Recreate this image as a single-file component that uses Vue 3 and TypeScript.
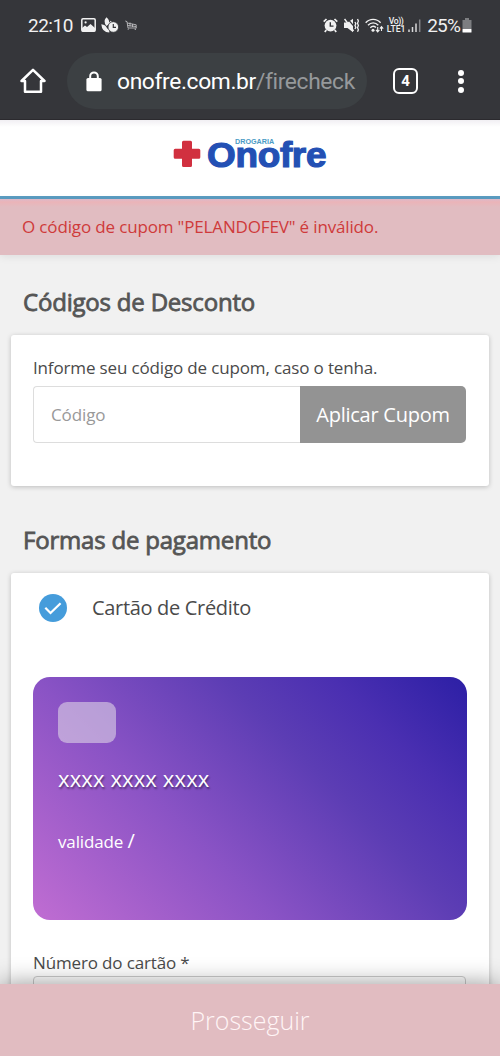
<script setup lang="ts">
import { ref } from 'vue'

const coupon = ref<string>('')
const tabCount = 4
</script>

<template>
  <div class="screen">
    <div class="browser">
      <div class="status">
        <span class="clock">22:10</span>
        <svg class="i-photo" width="15" height="14" viewBox="0 0 15 14">
          <rect x="0.8" y="0.8" width="13.4" height="12.4" rx="1.2" fill="none" stroke="#f1f1f1" stroke-width="1.5" />
          <circle cx="4.6" cy="4.4" r="1.1" fill="#f1f1f1" />
          <path d="M1 10l3-2.6 2 1.5L9.5 6 14 10v3.5H1z" fill="#f1f1f1" />
        </svg>
        <svg class="i-plant" width="18" height="16" viewBox="0 0 18 16">
          <path d="M5.5.3Q9.500 3.500 7.500 7.500L5.500 9Q1.500 4 5.500.3z" fill="#f1f1f1" />
          <path d="M.3 7.200Q5 7.500 6.300 12l2-2.500v6Q1 15.500.3 7.200z" fill="#f1f1f1" />
          <path d="M8 7.500l2.500-3" stroke="#f1f1f1" stroke-width="2" />
          <circle cx="12.300" cy="10" r="5.300" fill="#f1f1f1" stroke="#35363a" stroke-width=".8" />
          <path d="M12.300 7v3.300h2.700" fill="none" stroke="#35363a" stroke-width="1.200" />
        </svg>
        <svg class="i-cart" width="12" height="10" viewBox="0 0 12 10">
          <path d="M.3 1l1.700.6L3 8h8.500M2.200 3l9 1.800V8M2.500 5.500l8.500 1M5 2.500v4M7.500 4v3" fill="none" stroke="#bdbdc0" stroke-width=".9" />
          <circle cx="3.200" cy="9.100" r=".7" fill="#bdbdc0" />
          <circle cx="10.300" cy="9.200" r=".7" fill="#bdbdc0" />
        </svg>
        <span class="spacer"></span>
        <svg class="i-alarm" width="15" height="15" viewBox="0 0 15 15">
          <circle cx="7.500" cy="7.600" r="5.900" fill="#f1f1f1" />
          <path d="M.7 3.600L3.500 1M14.300 3.600L11.500 1M3.300 12l-1.500 2M11.700 12l1.500 2" stroke="#f1f1f1" stroke-width="1.700" />
          <path d="M7.300 4.200v3.900h3.200" fill="none" stroke="#35363a" stroke-width="1.400" />
        </svg>
        <svg class="i-mute" width="15" height="15" viewBox="0 0 15 15">
          <path d="M0 4.500h3.500L9 .8v13.400L3.500 10H0z" fill="#f1f1f1" />
          <path d="M4.800 2.200l5 6" stroke="#35363a" stroke-width="1.300" />
          <path d="M.5 1l9 12" stroke="#f1f1f1" stroke-width="1.500" />
          <path d="M11 4l.8 1.700-.8 1.800.8 1.800L11 11M13.500 1l.9 2-.9 2.200.9 2.300-.9 2.300.9 2-.9 2" fill="none" stroke="#f1f1f1" stroke-width="1.300" />
        </svg>
        <svg class="i-wifi" width="19" height="15" viewBox="0 0 19 15">
          <path d="M.7 4.800C4.800.2 11.500.2 15.600 4.800M3 7.300c3-3.200 7.300-3.200 10.300 0M5.300 9.800c1.600-1.700 4-1.700 5.600-.3" fill="none" stroke="#f1f1f1" stroke-width="1.400" />
          <circle cx="8" cy="12.200" r="1.500" fill="#f1f1f1" />
          <path d="M12.700 9v4.300M11 11.800l1.700 2 1.700-2M16.500 13V9M14.900 10.700l1.600-2 1.700 2" fill="none" stroke="#f1f1f1" stroke-width="1.100" />
        </svg>
        <span class="lte"><span class="vo">Vo))</span><span>LTE1</span></span>
        <svg class="i-signal" width="13" height="13" viewBox="0 0 13 13">
          <path d="M1 10.500V13M4.500 8v5M8 4.500V13" stroke="#d8d8d9" stroke-width="1.500" />
          <path d="M11.700.5V13" stroke="#85868a" stroke-width="1.500" />
        </svg>
        <span class="percent">25%</span>
        <svg class="i-battery" width="10" height="15" viewBox="0 0 10 15">
          <path d="M3 0h4v2h2.500v9H.5V2H3z" fill="#7d7e81" />
          <rect x=".5" y="11" width="9" height="3.500" rx=".5" fill="#fff" />
        </svg>
      </div>
      <div class="toolbar">
        <svg class="home" width="26" height="26" viewBox="0 0 26 26">
          <path d="M1.500 13L13 1.800 24.500 13H21v10.700H5V13z" fill="none" stroke="#fff" stroke-width="2.500" stroke-linejoin="round" />
        </svg>
        <div class="url">
          <svg width="16" height="21" viewBox="0 0 16 21">
            <path d="M4.200 8V5.200a3.800 3.800 0 0 1 7.600 0V8" fill="none" stroke="#fff" stroke-width="2" />
            <rect x=".4" y="7" width="15.200" height="13.300" rx="1.600" fill="#fff" />
          </svg>
          <span class="address">onofre.com.br<span class="path">/firecheck</span></span>
        </div>
        <div class="tabs">{{ tabCount }}</div>
        <div class="menu"><i></i><i></i><i></i></div>
      </div>
    </div>

    <header class="brand">
      <svg class="cross" width="28" height="28" viewBox="0 0 28 28">
        <path d="M10.500.7h7q1.500 0 1.500 1.500v6.600h6.800q1.500 0 1.500 1.500v7q0 1.500-1.500 1.500H19v6.700q0 1.500-1.500 1.500h-7Q9 27 9 25.500v-6.700H2.200q-1.500 0-1.500-1.500v-7q0-1.500 1.500-1.500H9V2.200Q9 .7 10.500.7z" fill="#d1303f" />
      </svg>
      <div class="logo"><span class="wordmark">Onofre</span><small>DROGARIA</small></div>
    </header>

    <div class="alert"><span>O código de cupom "PELANDOFEV" é inválido.</span></div>

    <main>
      <h2>Códigos de Desconto</h2>
      <section class="panel coupon">
        <label for="coupon">Informe seu código de cupom, caso o tenha.</label>
        <div class="field">
          <input id="coupon" v-model="coupon" type="text" placeholder="Código" />
          <button type="button">Aplicar Cupom</button>
        </div>
      </section>

      <h2 class="second">Formas de pagamento</h2>
      <section class="panel payment">
        <div class="method">
          <svg width="28" height="28" viewBox="0 0 28 28">
            <circle cx="14" cy="14" r="14" fill="#459cdb" />
            <path d="M6.300 13.800l5.200 5.200L21.600 9.300" fill="none" stroke="#fff" stroke-width="2.200" />
          </svg>
          <span>Cartão de Crédito</span>
        </div>
        <div class="credit">
          <div class="chip"></div>
          <div class="number">xxxx xxxx xxxx</div>
          <div class="expiry">validade <span>/</span></div>
        </div>
        <label class="card-label" for="card">Número do cartão *</label>
        <input id="card" class="card-input" type="text" />
      </section>
    </main>

    <button type="button" class="proceed">Prosseguir</button>
  </div>
</template>

<style>
body {
  margin: 0;
}
</style>

<style scoped>
.screen {
  position: relative;
  width: 500px;
  height: 1056px;
  overflow: hidden;
  background: #f1f1f1;
  color: #4a4a4a;
  font-family: "Open Sans", sans-serif;
}
.screen * {
  box-sizing: border-box;
}
.browser {
  height: 120px;
  background: #35363a;
  border-bottom: 1px solid #2b2a2e;
  font-family: Roboto, sans-serif;
  color: #f1f1f1;
}
.status {
  display: flex;
  align-items: center;
  height: 50px;
  padding: 0 28px;
}
.spacer {
  flex: 1;
}
.clock {
  width: 53px;
  font-size: 19px;
  letter-spacing: -0.5px;
}
.i-plant {
  margin-left: 5px;
}
.i-cart {
  margin-left: 6px;
}
.i-mute {
  margin-left: 6px;
}
.i-wifi {
  margin-left: 6px;
}
.lte {
  display: flex;
  flex-direction: column;
  align-items: center;
  width: 18px;
  margin-left: 3px;
  font-size: 8.6px;
  line-height: 8px;
  font-weight: 500;
}
.vo {
  letter-spacing: -0.4px;
}
.i-signal {
  margin-left: 3px;
}
.percent {
  margin-left: 6px;
  font-size: 19px;
  letter-spacing: -0.8px;
}
.i-battery {
  margin-left: 2px;
}
.toolbar {
  display: flex;
  align-items: center;
  height: 62px;
}
.home {
  margin-left: 20px;
}
.url {
  display: flex;
  align-items: center;
  width: 300px;
  height: 56px;
  margin-left: 21px;
  padding-left: 19px;
  border-radius: 28px;
  background: #3c4043;
}
.address {
  margin-left: 15px;
  font-size: 22.8px;
  letter-spacing: -0.36px;
  color: #fff;
  white-space: nowrap;
}
.path {
  color: #96999b;
}
.tabs {
  display: flex;
  align-items: center;
  justify-content: center;
  width: 25px;
  height: 26px;
  margin-left: 26px;
  border: 2.5px solid #fff;
  border-radius: 6px;
  font-size: 15px;
  font-weight: 700;
  color: #fff;
}
.menu {
  display: flex;
  flex-direction: column;
  gap: 2.500px;
  margin-left: 40px;
}
.menu i {
  width: 6px;
  height: 6px;
  border-radius: 50%;
  background: #fff;
}
.brand {
  display: flex;
  height: 79px;
  padding: 20px 0 0 173px;
  border-bottom: 3px solid #5b9dc2;
  background: linear-gradient(#f1eff3, #fff 7px);
}
.logo {
  position: relative;
  margin: -5px 0 0 6px;
  font-family: "Liberation Sans", Arial, sans-serif;
  font-weight: 700;
}
.wordmark {
  display: block;
  font-size: 35px;
  line-height: 40px;
  letter-spacing: -0.3px;
  color: #2350b4;
  -webkit-text-stroke: 1.2px #2350b4;
  transform: scaleX(1.055);
  transform-origin: left;
}
.logo small {
  position: absolute;
  left: 28px;
  top: 3px;
  font-size: 7.2px;
  line-height: 8px;
  color: #4b9bc5;
}
.alert {
  height: 56px;
  padding-left: 22px;
  background: linear-gradient(#dcb9c9, #ebb4b8 3px, #e1bcc1 8px);
  box-shadow: 0 2px 8px rgba(0, 0, 0, 0.08);
  color: #cf3a3a;
  font-size: 17px;
  letter-spacing: -0.15px;
  line-height: 56px;
}
h2 {
  height: 80px;
  margin: 0;
  padding-left: 23px;
  font-size: 24px;
  font-weight: 400;
  letter-spacing: -0.2px;
  line-height: 93px;
  color: #555;
  -webkit-text-stroke: 0.8px #555;
}
.second {
  height: 87px;
  line-height: 107px;
}
.panel {
  margin: 0 11px;
  padding: 0 22px;
  border-radius: 3px;
  background: #fff;
  box-shadow: 0 1px 5px rgba(0, 0, 0, 0.22);
}
.coupon {
  height: 151px;
  padding-top: 20px;
}
label {
  display: block;
  font-size: 17px;
  letter-spacing: -0.15px;
  line-height: 26px;
  color: #4a4a4a;
}
.field {
  display: flex;
  height: 57px;
  margin-top: 5px;
}
.field input {
  width: 267px;
  padding: 0 17px;
  border: 1px solid #ddd;
  border-right: 0;
  border-radius: 4px 0 0 4px;
  outline: 0;
  background: #fff;
  font: 17px "Open Sans", sans-serif;
  letter-spacing: -0.1px;
}
.field input::placeholder {
  color: #999;
  opacity: 1;
}
.field button {
  width: 166px;
  padding: 0;
  border: 0;
  border-radius: 0 5px 5px 0;
  background: #939393;
  font: 20px "Open Sans", sans-serif;
  letter-spacing: -0.25px;
  color: #fff;
}
.payment {
  height: 500px;
  padding-top: 21px;
}
.method {
  display: flex;
  align-items: center;
  height: 28px;
  padding-left: 6px;
  font-size: 20px;
  letter-spacing: -0.32px;
}
.method span {
  margin: -2px 0 0 25px;
}
.credit {
  height: 243px;
  margin: 55px 0 0;
  padding: 25px;
  border-radius: 17px;
  background: linear-gradient(45deg, #c06dd2 0%, #8a53c5 36%, #5c3db4 64%, #4a2fb1 80%, #2c1fa5 100%);
  color: #fff;
}
.chip {
  width: 58px;
  height: 41px;
  border-radius: 9px;
  background: rgba(222, 212, 230, 0.6);
}
.number {
  margin-top: 20px;
  font-size: 22px;
  line-height: 30px;
  letter-spacing: 0.13px;
  text-shadow: 1px 2px 2px rgba(0, 0, 0, 0.45);
}
.expiry {
  margin-top: 36px;
  font-size: 17px;
  line-height: 24px;
  letter-spacing: -0.15px;
}
.expiry span {
  font-size: 20px;
}
.card-label {
  margin-top: 30px;
}
.card-input {
  display: block;
  width: 433px;
  height: 57px;
  border: 1px solid #ccc;
  border-radius: 4px;
}
.proceed {
  position: absolute;
  left: 0;
  bottom: 0;
  width: 500px;
  height: 72px;
  padding: 0;
  border: 0;
  background: #e1bcc1;
  box-shadow: 0 0 24px rgba(0, 0, 0, 0.42);
  font: 300 25px "Open Sans", sans-serif;
  color: #fff5f6;
}
</style>
